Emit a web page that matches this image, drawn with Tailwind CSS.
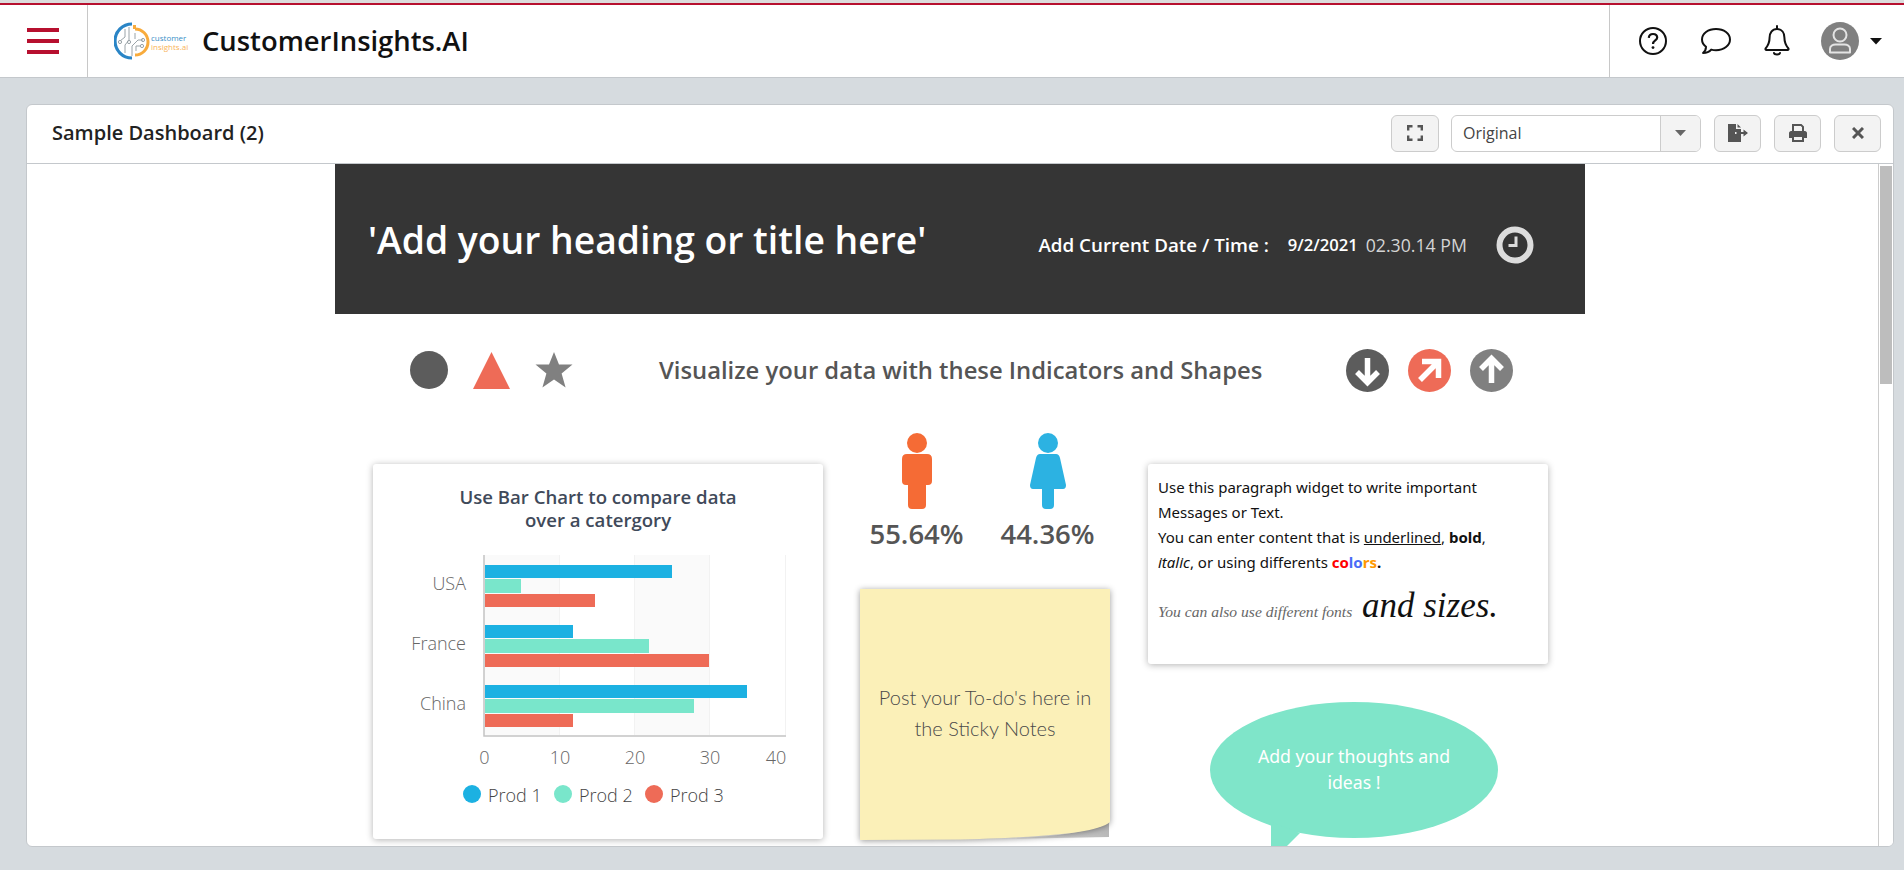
<!DOCTYPE html>
<html lang="en">
<head>
<meta charset="utf-8">
<title>CustomerInsights.AI</title>
<script src="https://cdn.jsdelivr.net/npm/@tailwindcss/browser@4"></script>
</head>
<body class="h-[870px] w-[1904px] overflow-hidden bg-[#d6dbdf] font-['Open_Sans',sans-serif]">
<header class="h-[78px] bg-white border-b border-[#c4c8cc]">
  <div class="h-[3px] bg-[#dcdcdc]"></div>
  <div class="h-[2px] bg-[#b7102f]"></div>
  <div class="flex h-[72px] items-center">
    <div class="flex h-full w-[88px] flex-col justify-center gap-[7px] border-r border-[#c8c8c8] pl-[27px]">
      <span class="block h-[4px] w-[32px] bg-[#b7102f]"></span>
      <span class="block h-[4px] w-[32px] bg-[#b7102f]"></span>
      <span class="block h-[4px] w-[32px] bg-[#b7102f]"></span>
    </div>
    <div class="ml-[26px] flex items-center">
      <svg class="block" width="36" height="38" viewBox="0 0 36 38" fill="none">
        <path d="M18 2A17 17 0 0 0 18 36" stroke="#2a85c6" stroke-width="3.2"/>
        <path d="M21 7A13 13 0 0 1 21 33" stroke="#f8ab3c" stroke-width="3"/>
        <rect x="19" y="3" width="3" height="4" fill="#f8ab3c"/>
        <path d="M11 7V15L6 19M15 5V18L11 23V31M21 11V17M18 24V34M18 24L24 18H29M22 24H27M22 24V29" stroke="#9aa3a8" stroke-width="1"/>
        <circle cx="6" cy="20" r="1.6" stroke="#9aa3a8"/><circle cx="15" cy="20" r="1.6" stroke="#9aa3a8"/><circle cx="29" cy="18" r="1.6" stroke="#9aa3a8"/><circle cx="28" cy="24" r="1.6" stroke="#9aa3a8"/>
      </svg>
      <div class="ml-[1px] w-[34px] whitespace-nowrap pt-[1px] text-[8px] leading-[9px]">
        <div class="text-[#3a8fc7]">customer</div>
        <div class="text-[#f8b45a]">insights.ai</div>
      </div>
    </div>
    <div class="ml-[17px] text-[27.4px] font-semibold leading-[36px] text-[#111]">CustomerInsights.AI</div>
    <div class="ml-auto flex h-full items-center border-l border-[#c8c8c8] pl-[28px]">
      <svg width="30" height="30" viewBox="0 0 30 30" fill="none" stroke="#111" stroke-width="2"><circle cx="15" cy="15" r="13"/><path d="M10.8 11.8C11 9 13 8 15 8C17.6 8 19.2 9.6 19.2 11.6C19.2 14.5 15 14.5 15 18" stroke-width="2.2"/><circle cx="15" cy="21.6" r="1.4" fill="#111" stroke="none"/></svg>
      <svg class="ml-[32px]" width="32" height="28" viewBox="0 0 32 28" fill="none" stroke="#111" stroke-width="2"><path d="M16 2C8 2 2 6.6 2 12.5C2 15.6 3.6 18 6 19.8C6 22 5 24.4 3 26C6.4 26 9.4 24.8 11.2 22.6C12.8 23 14.4 23.2 16 23.2C24 23.2 30 18.4 30 12.5C30 6.6 24 2 16 2Z" stroke-linejoin="round"/></svg>
      <svg class="ml-[32px]" width="26" height="32" viewBox="0 0 26 32" fill="none" stroke="#111" stroke-width="2"><path d="M13 4C8 4 5.6 8 5.6 12.5C5.6 18.5 4 20.6 1.6 23.5C1.2 24.2 1.6 25 2.4 25H23.6C24.4 25 24.8 24.2 24.4 23.5C22 20.6 20.4 18.5 20.4 12.5C20.4 8 18 4 13 4Z" stroke-linejoin="round"/><path d="M13 1V4M10 28C10.5 30 15.5 30 16 28" stroke-linecap="round"/></svg>
      <div class="ml-[31px] flex h-[38px] w-[38px] items-center justify-center rounded-full bg-[#808080]">
        <svg width="26" height="30" viewBox="0 0 26 30" fill="none" stroke="#e4e4e4" stroke-width="2"><circle cx="13" cy="9" r="6.5"/><path d="M3 26.5V23C3 20 6 18.5 8.5 18.5H17.5C20 18.5 23 20 23 23V26.5Z" stroke-linejoin="round"/></svg>
      </div>
      <svg class="ml-[11px] mr-[22px]" width="12" height="7" viewBox="0 0 12 7"><path d="M0 0H12L6 6.5Z" fill="#111"/></svg>
    </div>
  </div>
</header>
<main class="ml-[26px] mt-[26px] flex h-[743px] w-[1868px] flex-col overflow-hidden rounded-[6px] border border-[#c4c8cc] bg-white">
  <div class="flex h-[59px] shrink-0 items-center border-b border-[#c4c8cc] pb-[2px] pl-[25px]">
    <h1 class="text-[20px] font-semibold leading-[24px] text-[#222]">Sample Dashboard (2)</h1>
    <div class="ml-auto flex items-center pr-[12px]">
      <button class="flex h-[37px] w-[48px] items-center justify-center rounded-[6px] border border-[#ccc] bg-[#f3f3f3]">
        <svg width="16" height="16" viewBox="0 0 16 16" fill="none" stroke="#555" stroke-width="2.4"><path d="M1.2 5.5V1.2H5.5M10.5 1.2H14.8V5.5M14.8 10.5V14.8H10.5M5.5 14.8H1.2V10.5"/></svg>
      </button>
      <div class="ml-[12px] flex h-[37px] w-[250px] items-stretch overflow-hidden rounded-[6px] border border-[#ccc]">
        <div class="flex flex-1 items-center pl-[11px] text-[16px] text-[#444]">Original</div>
        <div class="flex w-[40px] items-center justify-center border-l border-[#ccc] bg-[#f3f3f3]">
          <svg width="11" height="6" viewBox="0 0 11 6"><path d="M0 0H11L5.5 6Z" fill="#666"/></svg>
        </div>
      </div>
      <button class="ml-[13px] flex h-[37px] w-[47px] items-center justify-center rounded-[6px] border border-[#ccc] bg-[#f3f3f3]">
        <svg width="20" height="18" viewBox="0 0 20 18"><path d="M0 0H8V5H13V8H7V10H13V18H0ZM9.5 0L13 3.6H9.5ZM8.5 8H15.5V5.5L20 9L15.5 12.5V10H8.5Z" fill="#555"/></svg>
      </button>
      <button class="ml-[13px] flex h-[37px] w-[47px] items-center justify-center rounded-[6px] border border-[#ccc] bg-[#f3f3f3]">
        <svg width="18" height="18" viewBox="0 0 18 18"><path d="M3 0H12.5L15 2.5V7H13V3.2L11.8 2H5V7H3ZM2 7H16C17 7 18 8 18 9V14H15V18H3V14H0V9C0 8 1 7 2 7ZM5 13V16H13V13Z" fill="#555" fill-rule="evenodd"/></svg>
      </button>
      <button class="ml-[13px] flex h-[37px] w-[47px] items-center justify-center rounded-[6px] border border-[#ccc] bg-[#f3f3f3]">
        <svg width="12" height="12" viewBox="0 0 12 12" fill="none" stroke="#555" stroke-width="3"><path d="M1 1L11 11M11 1L1 11"/></svg>
      </button>
    </div>
  </div>
  <div class="flex min-h-0 flex-1">
    <div class="min-w-0 flex-1 overflow-hidden">
      <div class="ml-[308px] w-[1250px]">
        <div class="flex h-[150px] items-center bg-[#353535] pl-[33px] text-white">
          <div class="mt-[2px] text-[37.3px] font-semibold leading-[48px]">'Add your heading or title here'</div>
          <div class="ml-[112px] mt-[12px] text-[18.8px] font-semibold leading-[24px]">Add Current Date / Time :</div>
          <div class="ml-[19px] mt-[12px] text-[16.6px] font-semibold leading-[24px]">9/2/2021</div>
          <div class="ml-[8px] mt-[12px] text-[17.7px] leading-[24px] text-[#d4d4d4]">02.30.14 PM</div>
          <svg class="ml-[29px] mt-[12px]" width="38" height="38" viewBox="0 0 38 38" fill="none" stroke="#dcdcdc"><circle cx="19" cy="19" r="15.5" stroke-width="6"/><path d="M20 10.5V19.5H12.5" stroke-width="3"/></svg>
        </div>
        <div class="flex h-[112px] items-center">
          <svg class="ml-[75px]" width="38" height="38" viewBox="0 0 38 38"><circle cx="19" cy="19" r="19" fill="#5c5c5c"/></svg>
          <svg class="ml-[25px]" width="37" height="37" viewBox="0 0 37 37"><path d="M18.5 0L37 37H0Z" fill="#ee6b57"/></svg>
          <svg class="ml-[25px]" width="38" height="36" viewBox="0 0 38 36"><path d="M19 0L24 12.6H37.5L26.6 21.4L30.6 35.5L19 27.4L7.4 35.5L11.4 21.4L.5 12.6H14Z" fill="#808080"/></svg>
          <div class="ml-[86px] w-[610px] whitespace-nowrap text-[23.8px] font-semibold leading-[32px] text-[#555]">Visualize your data with these Indicators and Shapes</div>
          <svg class="ml-[77px]" width="43" height="43" viewBox="0 0 43 43" fill="none" stroke="#fff" stroke-width="5.5"><circle cx="21.5" cy="21.5" r="21.5" fill="#5c5c5c" stroke="none"/><path d="M21.5 9V33M11 23L21.5 33.5L32 23"/></svg>
          <svg class="ml-[19px]" width="43" height="43" viewBox="0 0 43 43" fill="none" stroke="#fff" stroke-width="5.5"><circle cx="21.5" cy="21.5" r="21.5" fill="#ee6b57" stroke="none"/><path d="M12 31L30 13M14 12.5H30.5V29"/></svg>
          <svg class="ml-[19px]" width="43" height="43" viewBox="0 0 43 43" fill="none" stroke="#fff" stroke-width="5.5"><circle cx="21.5" cy="21.5" r="21.5" fill="#808080" stroke="none"/><path d="M21.5 34V10M11 20L21.5 9.5L32 20"/></svg>
        </div>
        <div class="flex items-start">
          <section class="ml-[38px] mt-[38px] h-[375px] w-[450px] shrink-0 rounded-[3px] bg-white shadow-[0_1px_7px_rgba(0,0,0,0.3)]">
            <h2 class="h-[76px] pt-[21px] text-center text-[18.6px] font-semibold leading-[23px] text-[#3f4a5a]">Use Bar Chart to compare data<br>over a catergory</h2>
            <svg class="block" width="450" height="299" viewBox="373 540 450 299" font-family="Open Sans, sans-serif" font-size="18" font-weight="300" fill="#666">
              <rect x="484" y="555" width="75" height="180" fill="#fafafa"/>
              <rect x="634" y="555" width="76" height="180" fill="#fafafa"/>
              <path d="M559.5 555V735M634.5 555V735M709.5 555V735M785.5 555V735" stroke="#f2f2f2"/>
              <path d="M484 555V736H786" fill="none" stroke="#c4c4c4" stroke-width="1.5"/>
              <rect x="485" y="565" width="187" height="13" fill="#1cb1e2"/>
              <rect x="485" y="579" width="36" height="14" fill="#79e6cb"/>
              <rect x="485" y="594" width="110" height="13" fill="#ee6b57"/>
              <rect x="485" y="625" width="88" height="13" fill="#1cb1e2"/>
              <rect x="485" y="639" width="164" height="14" fill="#79e6cb"/>
              <rect x="485" y="654" width="224" height="13" fill="#ee6b57"/>
              <rect x="485" y="685" width="262" height="13" fill="#1cb1e2"/>
              <rect x="485" y="699" width="209" height="14" fill="#79e6cb"/>
              <rect x="485" y="714" width="88" height="13" fill="#ee6b57"/>
              <g text-anchor="end"><text x="466" y="590">USA</text><text x="466" y="650">France</text><text x="466" y="710">China</text></g>
              <g text-anchor="middle"><text x="484.5" y="764">0</text><text x="560" y="764">10</text><text x="635" y="764">20</text><text x="710" y="764">30</text><text x="776" y="764">40</text></g>
              <g fill="#444">
                <circle cx="472" cy="794" r="9" fill="#1cb1e2"/><text x="488" y="802">Prod 1</text>
                <circle cx="563" cy="794" r="9" fill="#79e6cb"/><text x="579" y="802">Prod 2</text>
                <circle cx="654" cy="794" r="9" fill="#ee6b57"/><text x="670" y="802">Prod 3</text>
              </g>
            </svg>
          </section>
          <div class="ml-[37px] mt-[7px] w-[250px] shrink-0">
            <div class="-ml-[9px] flex w-[262px]">
              <div class="w-[131px] text-center">
                <svg class="mx-auto block" width="30" height="76" viewBox="0 0 30 76"><circle cx="15" cy="10" r="10" fill="#f56b35"/><path d="M5 21H25Q30 21 30 26V48Q30 52 26 52H24V72Q24 76 20 76H10Q6 76 6 72V52H4Q0 52 0 48V26Q0 21 5 21Z" fill="#f56b35"/></svg>
                <div class="mt-[6px] text-[27.5px] font-semibold leading-[38px] text-[#555]">55.64%</div>
              </div>
              <div class="w-[131px] text-center">
                <svg class="mx-auto block" width="36" height="76" viewBox="0 0 36 76"><circle cx="18" cy="10" r="10" fill="#2cb2e2"/><path d="M10 21H26Q29 21 30 25L36 52Q36 56 33 56H24V72Q24 76 20 76H16Q12 76 12 72V56H3Q0 56 0 52L6 25Q7 21 10 21Z" fill="#2cb2e2"/></svg>
                <div class="mt-[6px] text-[27.5px] font-semibold leading-[38px] text-[#555]">44.36%</div>
              </div>
            </div>
            <div class="relative mt-[36px] flex h-[251px] w-[250px] items-center justify-center">
              <svg class="absolute left-0 top-0 overflow-visible" width="250" height="251" viewBox="0 0 250 251">
                <defs><linearGradient id="curl" x1="0" y1="0" x2="1" y2="0"><stop offset="0" stop-color="#f0f0f0"/><stop offset="1" stop-color="#b8b8b8"/></linearGradient></defs>
                <path d="M140 250C190 248 232 244 249 232V248Z" fill="url(#curl)"/>
                <path d="M0 0H250V233C238 243 195 248 100 250.5L0 251Z" fill="#fbf0b8" class="drop-shadow-[0_1px_3px_rgba(0,0,0,0.4)]"/>
              </svg>
              <p class="relative -mt-[4px] w-[240px] text-center font-['Lato',sans-serif] text-[20px] font-light leading-[31px] text-[#4a4a4a]">Post your To-do's here in<br>the Sticky Notes</p>
            </div>
          </div>
          <div class="ml-[38px] mt-[38px] w-[400px] shrink-0">
            <section class="h-[200px] rounded-[3px] bg-white px-[10px] pt-[11px] font-['Noto_Sans',sans-serif] text-[15px] leading-[25px] text-[#111] shadow-[0_1px_7px_rgba(0,0,0,0.3)]">
              <p>Use this paragraph widget to write important<br>Messages or Text.<br>You can enter content that is <u>underlined</u>, <b>bold</b>,<br><i>italic</i>, or using differents <b><span class="text-[#f00]">co</span><span class="text-[#4a6cf7]">lo</span><span class="text-[#f90]">rs</span>.</b></p>
              <p class="mt-[6px] whitespace-nowrap font-['Liberation_Serif',serif] italic leading-[50px]"><span class="text-[15.6px] text-[#666]">You can also use different fonts</span> <span class="ml-[6px] text-[35px] text-[#111]">and sizes.</span></p>
            </section>
            <div class="relative ml-[62px] mt-[38px] flex h-[136px] w-[288px] items-center justify-center">
              <svg class="absolute left-0 top-0" width="288" height="160" viewBox="0 0 288 160"><ellipse cx="144" cy="68" rx="144" ry="68" fill="#7fe5c9"/><path d="M61 120V160L90 131Z" fill="#7fe5c9"/></svg>
              <p class="relative -mt-[3px] w-[210px] text-center font-['Noto_Sans',sans-serif] text-[17.7px] leading-[26px] text-white">Add your thoughts and ideas !</p>
            </div>
          </div>
        </div>
      </div>
    </div>
    <div class="w-[15px] shrink-0 border-l border-[#ccc] bg-white pl-[1px] pr-[1px] pt-[2px]">
      <div class="h-[218px] w-full bg-[#bdbdbd]"></div>
    </div>
  </div>
</main>
</body>
</html>
